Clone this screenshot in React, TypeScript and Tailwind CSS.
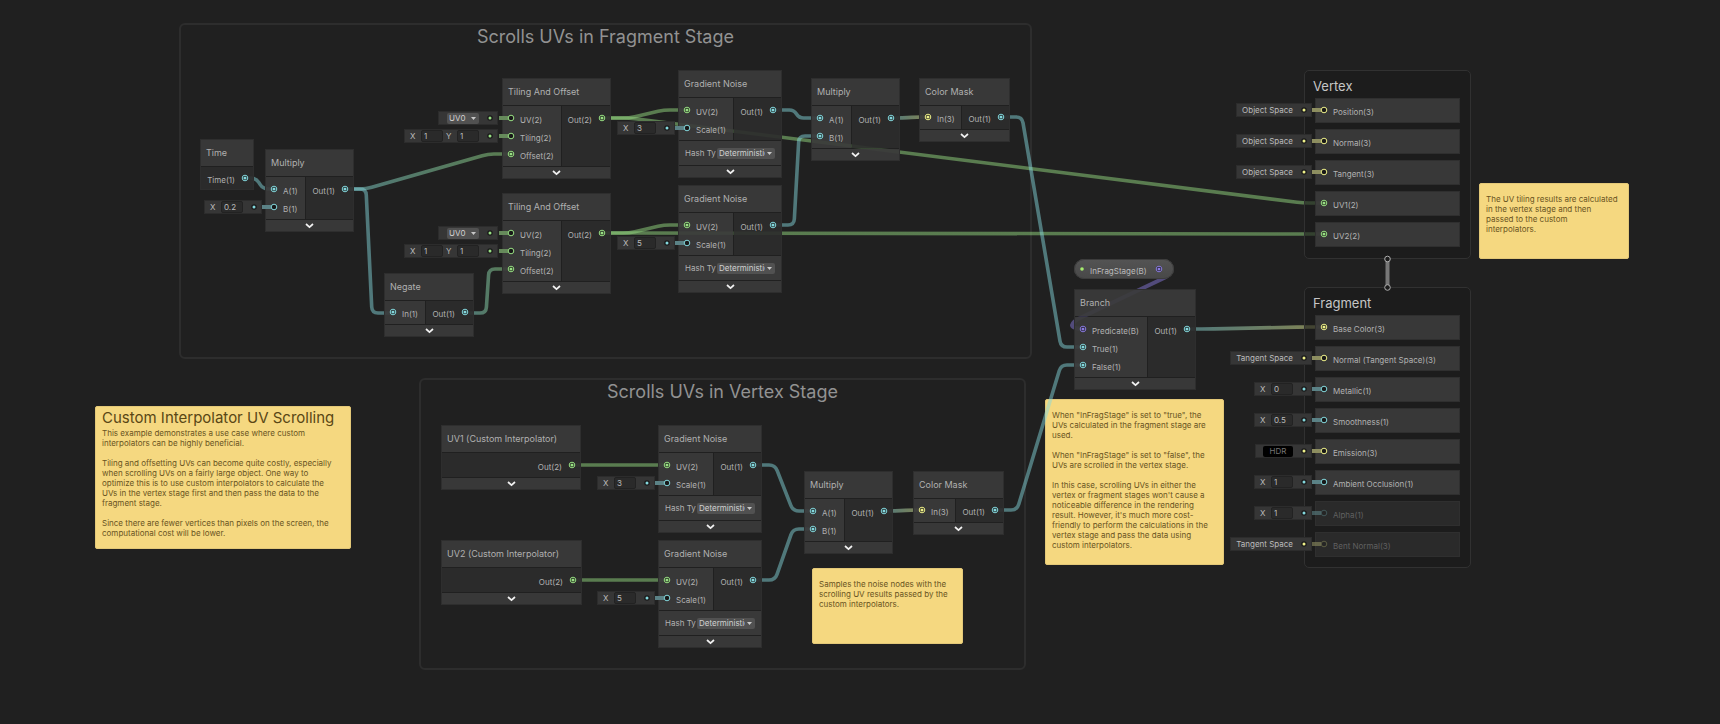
import React from "react";

type Hue = "teal" | "green" | "yellow" | "purple";

const HUES: Record<Hue, string> = {
  teal: "#84d8dd",
  green: "#98e083",
  yellow: "#eef08a",
  purple: "#8a7be0",
};

type Slot =
  | { kind: "x"; value: string }
  | { kind: "xy"; x: string; y: string }
  | { kind: "uv" }
  | { kind: "space"; text: string }
  | { kind: "hdr" };

type Port = { label: string; hue: Hue; linked?: boolean; slot?: Slot; off?: boolean };

type GraphNode = {
  title: string;
  x: number;
  y: number;
  w: number;
  inWidth?: number;
  inputs?: Port[];
  output: Port;
  hash?: boolean;
  foot?: boolean;
  compact?: boolean;
};

const out1: Port = { label: "Out(1)", hue: "teal", linked: true };
const out2: Port = { label: "Out(2)", hue: "green", linked: true };

const tilingInputs: Port[] = [
  { label: "UV(2)", hue: "green", slot: { kind: "uv" } },
  { label: "Tiling(2)", hue: "green", slot: { kind: "xy", x: "1", y: "1" } },
  { label: "Offset(2)", hue: "green", linked: true },
];
const noiseInputs = (scale: string): Port[] => [
  { label: "UV(2)", hue: "green", linked: true },
  { label: "Scale(1)", hue: "teal", slot: { kind: "x", value: scale } },
];
const multiplyInputs: Port[] = [
  { label: "A(1)", hue: "teal", linked: true },
  { label: "B(1)", hue: "teal", linked: true },
];
const maskInputs: Port[] = [{ label: "In(3)", hue: "yellow", linked: true }];

const NODES: GraphNode[] = [
  { title: "Time", x: 200, y: 139, w: 54, output: { label: "Time(1)", hue: "teal", linked: true }, compact: true, foot: false },
  {
    title: "Multiply", x: 265, y: 149, w: 89, inWidth: 40, output: out1,
    inputs: [
      { label: "A(1)", hue: "teal", linked: true },
      { label: "B(1)", hue: "teal", slot: { kind: "x", value: "0.2" } },
    ],
  },
  { title: "Negate", x: 384, y: 273, w: 90, inWidth: 41, inputs: [{ label: "In(1)", hue: "teal", linked: true }], output: out1, compact: true },
  { title: "Tiling And Offset", x: 502, y: 78, w: 109, inWidth: 59, inputs: tilingInputs, output: out2 },
  { title: "Tiling And Offset", x: 502, y: 193, w: 109, inWidth: 59, inputs: tilingInputs, output: out2 },
  { title: "Gradient Noise", x: 678, y: 70, w: 104, inWidth: 55, inputs: noiseInputs("3"), output: out1, hash: true },
  { title: "Gradient Noise", x: 678, y: 185, w: 104, inWidth: 55, inputs: noiseInputs("5"), output: out1, hash: true },
  { title: "Multiply", x: 811, y: 78, w: 89, inWidth: 40, inputs: multiplyInputs, output: out1 },
  { title: "Color Mask", x: 919, y: 78, w: 91, inWidth: 42, inputs: maskInputs, output: out1, compact: true },
  { title: "UV1 (Custom Interpolator)", x: 441, y: 425, w: 140, output: out2 },
  { title: "UV2 (Custom Interpolator)", x: 441, y: 540, w: 141, output: out2 },
  { title: "Gradient Noise", x: 658, y: 425, w: 104, inWidth: 55, inputs: noiseInputs("3"), output: out1, hash: true },
  { title: "Gradient Noise", x: 658, y: 540, w: 104, inWidth: 55, inputs: noiseInputs("5"), output: out1, hash: true },
  { title: "Multiply", x: 804, y: 471, w: 89, inWidth: 40, inputs: multiplyInputs, output: out1 },
  { title: "Color Mask", x: 913, y: 471, w: 91, inWidth: 42, inputs: maskInputs, output: out1, compact: true },
  {
    title: "Branch", x: 1074, y: 289, w: 122, inWidth: 73, output: out1,
    inputs: [
      { label: "Predicate(B)", hue: "purple", linked: true },
      { label: "True(1)", hue: "teal", linked: true },
      { label: "False(1)", hue: "teal", linked: true },
    ],
  },
];

type Wire = { pts: [number, number][]; from: Hue; to: Hue };
const WIRES: Wire[] = [
  { pts: [[245, 178], [256, 178], [263, 189], [274, 189]], from: "teal", to: "teal" },
  { pts: [[345, 189], [366, 189], [488, 154], [511, 154]], from: "teal", to: "green" },
  { pts: [[345, 189], [366, 189], [372, 313], [393, 313]], from: "teal", to: "teal" },
  { pts: [[465, 313], [486, 313], [489, 269], [511, 269]], from: "teal", to: "green" },
  { pts: [[602, 118], [629, 118], [664, 110], [687, 110]], from: "green", to: "green" },
  { pts: [[602, 118], [629, 118], [1303, 203], [1324, 203]], from: "green", to: "green" },
  { pts: [[602, 233], [629, 233], [664, 225], [687, 225]], from: "green", to: "green" },
  { pts: [[602, 233], [629, 233], [1303, 234], [1324, 234]], from: "green", to: "green" },
  { pts: [[773, 110], [794, 110], [799, 118], [820, 118]], from: "teal", to: "teal" },
  { pts: [[773, 225], [794, 225], [799, 136], [820, 136]], from: "teal", to: "teal" },
  { pts: [[891, 118], [902, 118], [917, 117], [928, 117]], from: "teal", to: "yellow" },
  { pts: [[884, 511], [895, 511], [911, 510], [922, 510]], from: "teal", to: "yellow" },
  { pts: [[1001, 117], [1022, 117], [1061, 347], [1083, 347]], from: "teal", to: "teal" },
  { pts: [[995, 510], [1017, 510], [1061, 365], [1083, 365]], from: "teal", to: "teal" },
  { pts: [[572, 465], [600, 465], [640, 465], [667, 465]], from: "green", to: "green" },
  { pts: [[573, 580], [600, 580], [640, 580], [667, 580]], from: "green", to: "green" },
  { pts: [[753, 465], [775, 465], [793, 511], [813, 511]], from: "teal", to: "teal" },
  { pts: [[753, 580], [775, 580], [793, 529], [813, 529]], from: "teal", to: "teal" },
  { pts: [[1187, 329], [1208, 329], [1303, 327], [1324, 327]], from: "teal", to: "yellow" },
];

function wirePath(pts: [number, number][]) {
  let d = `M${pts[0][0]} ${pts[0][1]}`;
  for (let i = 1; i < pts.length - 1; i++) {
    const [px, py] = pts[i - 1];
    const [cx, cy] = pts[i];
    const [nx, ny] = pts[i + 1];
    const a = Math.hypot(cx - px, cy - py);
    const b = Math.hypot(nx - cx, ny - cy);
    const r = Math.min(6, a / 2, b / 2);
    d += ` L${cx - ((cx - px) / a) * r} ${cy - ((cy - py) / a) * r}`;
    d += ` Q${cx} ${cy} ${cx + ((nx - cx) / b) * r} ${cy + ((ny - cy) / b) * r}`;
  }
  const end = pts[pts.length - 1];
  return `${d} L${end[0]} ${end[1]}`;
}

function Wires() {
  return (
    <svg className="pointer-events-none absolute left-0 top-0" width="1720" height="724" fill="none" aria-hidden="true">
      <defs>
        {WIRES.map((w, i) => (
          <linearGradient
            key={i}
            id={`wire-${i}`}
            gradientUnits="userSpaceOnUse"
            x1={w.pts[0][0]}
            x2={w.pts[3][0]}
            y1="0"
            y2="0"
          >
            <stop stopColor={HUES[w.from]} />
            <stop offset="1" stopColor={HUES[w.to]} />
          </linearGradient>
        ))}
      </defs>
      {WIRES.map((w, i) => (
        <path key={i} d={wirePath(w.pts)} stroke={`url(#wire-${i})`} strokeWidth="3.6" opacity="0.48" />
      ))}
      <path
        d="M1159 269H1164Q1174 273 1162 279L1078 319Q1064 328 1083 329"
        stroke={HUES.purple}
        strokeWidth="4"
        opacity="0.48"
      />
    </svg>
  );
}

function Pin({ hue, linked, off }: { hue: Hue; linked?: boolean; off?: boolean }) {
  return (
    <svg className="relative shrink-0" width="8" height="8" viewBox="0 0 8 8" aria-hidden="true" opacity={off ? 0.25 : 1}>
      <circle cx="4" cy="4" r="2.8" fill="#181818" stroke={HUES[hue]} strokeWidth="1" />
      {linked && <circle cx="4" cy="4" r="1.6" fill={HUES[hue]} />}
    </svg>
  );
}

function Dot({ hue }: { hue: Hue }) {
  return (
    <svg className="shrink-0" width="6" height="6" viewBox="0 0 6 6" aria-hidden="true">
      <circle cx="3" cy="3" r="2.8" fill="#1a1a1a" />
      <circle cx="3" cy="3" r="1.5" fill={HUES[hue]} />
    </svg>
  );
}

function Field({ axis, value }: { axis: string; value: string }) {
  return (
    <label className="flex items-center text-[8px] leading-[10px] text-[#bcbcbc]">
      <span className="w-[11px]">{axis}</span>
      <input
        defaultValue={value}
        className="h-3 w-[22px] rounded-[2px] border border-[#222222] bg-[#2a2a2a] pl-[2px] text-[8px] leading-[10px] text-[#bcbcbc] outline-none"
      />
    </label>
  );
}

function Drop({ label, options, className }: { label: string; options: string[]; className: string }) {
  return (
    <span className={`relative flex h-[11px] shrink-0 ${className}`}>
      <select
        aria-label={label}
        className="h-full w-full appearance-none overflow-hidden rounded-[2px] bg-[#515151] pl-[2px] pr-[10px] text-[8px] leading-[11px] text-[#d0d0d0] outline-none"
      >
        {options.map((o) => (
          <option key={o}>{o}</option>
        ))}
      </select>
      <svg className="pointer-events-none absolute right-[3px] top-1" width="5" height="3" viewBox="0 0 5 3" aria-hidden="true">
        <path d="M0 0H5L2.5 3Z" fill="#c8c8c8" />
      </svg>
    </span>
  );
}

function SlotBox({ slot, hue }: { slot: Slot; hue: Hue }) {
  return (
    <div
      className={`absolute right-full top-[2px] flex h-[14px] items-center gap-2 whitespace-nowrap bg-[#363636] pl-[6px] pr-[5px] text-[8px] leading-[10px] text-[#bcbcbc] outline-1 -outline-offset-1 outline-[#2c2c2c] ${
        slot.kind === "xy" || slot.kind === "uv" ? "mr-1" : "mr-[3px]"
      }`}
    >
      {slot.kind === "x" && <Field axis="X" value={slot.value} />}
      {slot.kind === "xy" && (
        <div className="flex gap-[3px]">
          <Field axis="X" value={slot.x} />
          <Field axis="Y" value={slot.y} />
        </div>
      )}
      {slot.kind === "uv" && <Drop label="UV channel" options={["UV0", "UV1", "UV2", "UV3"]} className="ml-[3px] w-8" />}
      {slot.kind === "space" && <span>{slot.text}</span>}
      {slot.kind === "hdr" && (
        <button className="ml-[2px] h-[11px] w-[30px] rounded-[2px] bg-black text-[8px] leading-[11px] text-[#757575]">HDR</button>
      )}
      <Dot hue={hue} />
    </div>
  );
}

const STUBS: Record<Hue, string> = {
  teal: "bg-[#5b8286]",
  green: "bg-[#668a5b]",
  yellow: "bg-[#8d8e60]",
  purple: "bg-[#5a5088]",
};

function InputRow({ port }: { port: Port }) {
  return (
    <div className="relative flex h-[18px] items-center gap-[5px] pl-[5px]">
      {port.slot && <SlotBox slot={port.slot} hue={port.hue} />}
      {port.slot && (
        <span className={`absolute left-[-3px] top-[7px] h-1 w-[9px] ${STUBS[port.hue]} ${port.off ? "opacity-60" : ""}`} />
      )}
      <Pin hue={port.hue} linked={port.linked} off={port.off} />
      <span className={`whitespace-nowrap pt-[3px] text-[8px] leading-[10px] ${port.off ? "text-[#606060]" : "text-[#b2b2b2]"}`}>
        {port.label}
      </span>
    </div>
  );
}

function NodeCard({ node }: { node: GraphNode }) {
  const pad = node.compact ? "pt-[2px] pb-[3px]" : "py-[3px]";
  return (
    <section
      className="absolute flex flex-col gap-px bg-[#222222]/60 outline-1 -outline-offset-1 outline-[#2e2e2e]"
      style={{ left: node.x, top: node.y, width: node.w }}
    >
      <h3 className="flex h-[27px] items-center whitespace-nowrap bg-[#3f3f3f]/80 pl-[6px] text-[9px] text-[#b0b0b0]">{node.title}</h3>
      <div className="flex gap-px">
        {node.inputs && (
          <div className={`shrink-0 bg-[#3f3f3f]/80 ${pad}`} style={{ width: node.inWidth }}>
            {node.inputs.map((p) => (
              <InputRow key={p.label} port={p} />
            ))}
          </div>
        )}
        <div className={`flex-1 bg-[#2e2e2e]/80 ${pad}`}>
          <div className="flex h-[18px] items-center justify-end gap-[6px] pr-[5px]">
            <span className="whitespace-nowrap pt-[3px] text-[8px] leading-[10px] text-[#b2b2b2]">{node.output.label}</span>
            <Pin hue={node.output.hue} linked />
          </div>
        </div>
      </div>
      {node.hash && (
        <div className="flex h-6 items-center bg-[#393939] px-[7px] text-[8px] text-[#b2b2b2]">
          <span className="w-8 whitespace-nowrap">Hash Ty</span>
          <Drop label="Hash Type" options={["Deterministic", "LegacyMod"]} className="w-[58px]" />
        </div>
      )}
      {node.foot !== false && (
        <button aria-label={`Collapse ${node.title}`} className="flex h-3 items-center justify-center bg-[#3d3d3d]/85">
          <svg width="9" height="6" viewBox="0 0 9 6" fill="none" aria-hidden="true">
            <path d="M1 1L4.5 4.2L8 1" stroke="#f2f2f2" strokeWidth="1.7" />
          </svg>
        </button>
      )}
    </section>
  );
}

function Context({ title, ports, className }: { title: string; ports: Port[]; className: string }) {
  return (
    <section className={`absolute w-[167px] rounded-[5px] border border-[#313131] bg-[#1b1b1b]/60 px-[10px] ${className}`}>
      <h2 className="-ml-[2px] flex h-[27px] items-end pb-1 text-[13px] leading-4 text-[#c6c6c6]">{title}</h2>
      <div className="flex flex-col gap-[6px]">
        {ports.map((p) => (
          <div
            key={p.label}
            className={`h-[25px] pt-[3px] outline-1 -outline-offset-1 outline-[#2f2f2f] ${p.off ? "bg-[#2a2a2a]" : "bg-[#3c3c3c]/90"}`}
          >
            <InputRow port={p} />
          </div>
        ))}
      </div>
    </section>
  );
}

const objectSpace: Slot = { kind: "space", text: "Object Space" };
const tangentSpace: Slot = { kind: "space", text: "Tangent Space" };

const VERTEX: Port[] = [
  { label: "Position(3)", hue: "yellow", slot: objectSpace },
  { label: "Normal(3)", hue: "yellow", slot: objectSpace },
  { label: "Tangent(3)", hue: "yellow", slot: objectSpace },
  { label: "UV1(2)", hue: "green", linked: true },
  { label: "UV2(2)", hue: "green", linked: true },
];

const FRAGMENT: Port[] = [
  { label: "Base Color(3)", hue: "yellow", linked: true },
  { label: "Normal (Tangent Space)(3)", hue: "yellow", slot: tangentSpace },
  { label: "Metallic(1)", hue: "teal", slot: { kind: "x", value: "0" } },
  { label: "Smoothness(1)", hue: "teal", slot: { kind: "x", value: "0.5" } },
  { label: "Emission(3)", hue: "yellow", slot: { kind: "hdr" } },
  { label: "Ambient Occlusion(1)", hue: "teal", slot: { kind: "x", value: "1" } },
  { label: "Alpha(1)", hue: "teal", slot: { kind: "x", value: "1" }, off: true },
  { label: "Bent Normal(3)", hue: "yellow", slot: tangentSpace, off: true },
];

function Group({ title, className }: { title: string; className: string }) {
  return (
    <section className={`absolute rounded-md border-2 border-[#2d2d2d] ${className}`}>
      <h2 className="pt-px text-center text-[18px] leading-[22px] text-[#929292]">{title}</h2>
    </section>
  );
}

function Note({ title, text, className }: { title?: string; text: string; className: string }) {
  return (
    <aside className={`absolute rounded-[2px] border border-[#e3c878] bg-[#f5d880] px-[6px] ${title ? "pt-px" : "pt-[10px]"} ${className}`}>
      {title && <h2 className="whitespace-nowrap pb-px text-[15px] leading-[19px] text-[#594715]">{title}</h2>}
      <p className="whitespace-pre text-[8px] leading-[10px] text-[#69541f]">{text}</p>
    </aside>
  );
}

export default function App() {
  return (
    <main className="relative min-h-screen w-full overflow-hidden bg-[#202020] font-['Inter',sans-serif]">
      <Group title="Scrolls UVs in Fragment Stage" className="left-[179px] top-[23px] h-[336px] w-[853px]" />
      <Group title="Scrolls UVs in Vertex Stage" className="left-[419px] top-[378px] h-[292px] w-[607px]" />

      <Note
        className="left-[95px] top-[406px] h-[143px] w-64"
        title="Custom Interpolator UV Scrolling"
        text={`This example demonstrates a use case where custom
interpolators can be highly beneficial.

Tiling and offsetting UVs can become quite costly, especially
when scrolling UVs on a fairly large object. One way to
optimize this is to use custom interpolators to calculate the
UVs in the vertex stage first and then pass the data to the
fragment stage.

Since there are fewer vertices than pixels on the screen, the
computational cost will be lower.`}
      />
      <Note
        className="left-[1479px] top-[183px] h-[76px] w-[150px]"
        text={`The UV tiling results are calculated
in the vertex stage and then
passed to the custom
interpolators.`}
      />
      <Note
        className="left-[812px] top-[568px] h-[76px] w-[151px]"
        text={`Samples the noise nodes with the
scrolling UV results passed by the
custom interpolators.`}
      />
      <Note
        className="left-[1045px] top-[399px] h-[166px] w-[179px]"
        text={`When "InFragStage" is set to "true", the
UVs calculated in the fragment stage are
used.

When "InFragStage" is set to "false", the
UVs are scrolled in the vertex stage.

In this case, scrolling UVs in either the
vertex or fragment stages won't cause a
noticeable difference in the rendering
result. However, it's much more cost-
friendly to perform the calculations in the
vertex stage and pass the data using
custom interpolators.`}
      />

      <Wires />

      <Context title="Vertex" ports={VERTEX} className="left-[1304px] top-[70px] h-[189px]" />
      <Context title="Fragment" ports={FRAGMENT} className="left-[1304px] top-[287px] h-[281px]" />
      <svg className="absolute left-[1383px] top-[254px]" width="9" height="38" viewBox="0 0 9 38" fill="none" aria-hidden="true">
        <path d="M4.5 5V33" stroke="#777777" strokeWidth="4" />
        <circle cx="4.5" cy="5" r="2.8" fill="#1c1c1c" stroke="#b0b0b0" />
        <circle cx="4.5" cy="33.5" r="2.8" fill="#1c1c1c" stroke="#b0b0b0" />
      </svg>

      {NODES.map((n) => (
        <NodeCard key={`${n.x}-${n.y}`} node={n} />
      ))}

      <div className="absolute left-[1074px] top-[259px] flex h-5 w-[100px] items-center rounded-full bg-linear-to-b from-[#545454] to-[#484848] pl-[5px] pr-[11px] outline-1 -outline-offset-1 outline-[#3c3c3c]">
        <svg className="mr-[5px] shrink-0" width="6" height="6" viewBox="0 0 6 6" aria-hidden="true">
          <circle cx="3" cy="3" r="1.8" fill="#a6ee6e" />
        </svg>
        <span className="flex-1 whitespace-nowrap pt-[3px] text-[8px] leading-[10px] text-[#bcbcbc]">InFragStage(B)</span>
        <Pin hue="purple" linked />
      </div>
    </main>
  );
}
